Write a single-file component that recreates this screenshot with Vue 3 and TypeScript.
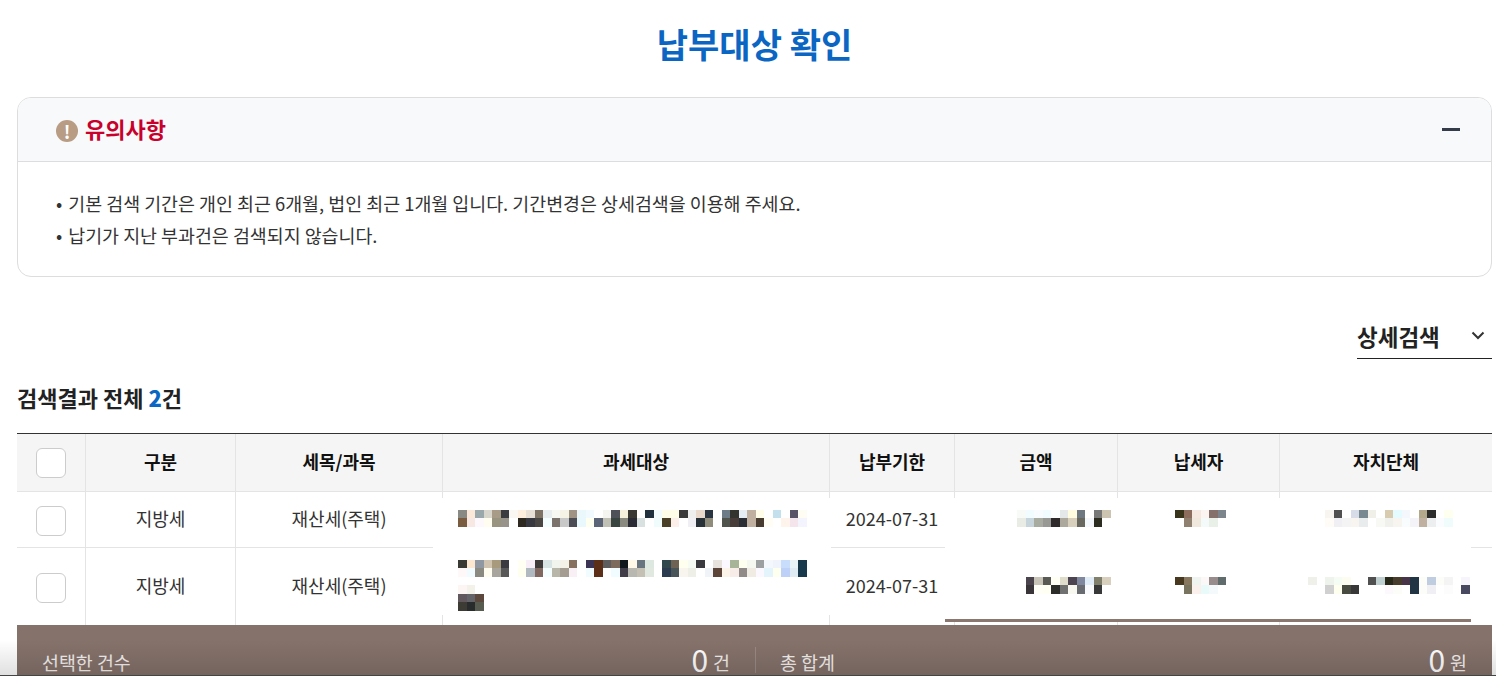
<script setup lang="ts">
interface Mosaic {
  left: number;
  lines: string[];
}

interface Row {
  kind: string;
  tax: string;
  subject: Mosaic;
  due: string;
  amount: Mosaic;
  payer: Mosaic;
  gov: Mosaic;
}

const notes = [
  "기본 검색 기간은 개인 최근 6개월, 법인 최근 1개월 입니다. 기간변경은 상세검색을 이용해 주세요.",
  "납기가 지난 부과건은 검색되지 않습니다.",
];

const heads = ["구분", "세목/과목", "과세대상", "납부기한", "금액", "납세자", "자치단체"];

// redacted values in the source picture, one hex colour per block ("-" = blank)
const rows: Row[] = [
  {
    kind: "지방세",
    tax: "재산세(주택)",
    due: "2024-07-31",
    subject: {
      left: 15,
      lines: [
        "8a8a85 fce8d8 9aa8ac d8d6cc a89c88 3a3c42 faf6f2 fdeedd e8e0d6 7e7264 e8eef0 f8f8f2 f5f2e6 a09484 eaf8fc f0faff - f4f4f0 4e5258 f5f0dc 3a3832 - 20303c f2fcfc fffce8 fffce8 3a3a3a eeeeee e8d8cc 2a3440 - 6e7c88 34342f e4ecf4 c0b0a0 fffce8 - c4e0ec - 5a5468 fffcf4",
        "7a5c40 f8e8e4 fdf8fc fffdf0 989480 98948c - 2e2a22 383840 4a4644 f4feff 7c746c c8c8c8 4c4c54 e8f8fc fffff0 5c6478 c0c0b4 384440 8a8a80 2a2a34 d8e0e0 - f0fcfc 4a4028 fceee8 - f0f0f4 283038 908c7c - 50544c 483c38 282e34 c0b0a0 483c30 fffdf4 - fff4ec f4e4ec f4f4ff",
      ],
    },
    amount: {
      left: 62,
      lines: [
        "f8faf8 f0fcff f8fcff f0fcff fcffff e4e8e8 fffce0 6e7880 - 787878 ccc4b0",
        "e8ece4 c8d4dc a8aca0 989894 2e2a2c aca89c d8d0bc 686860 f4f8fc 2c2c20 -",
      ],
    },
    payer: {
      left: 57,
      lines: [
        "38341c 8c6c5c f4e8e0 fcf4f0 86706c 7c848c",
        "- 908070 f0e8dc f4fafa e8f0e8 -",
      ],
    },
    gov: {
      left: 45,
      lines: [
        "f8f4f0 505050 - d8dce8 788890 f0f0e8 - d8ccb0 e4fcff f4f8fc - b4a88c 2c2c2c - fffff0",
        "fffcf8 f0f0f4 f4f4f4 f8f4f0 e8ecec - f8f8f4 f0f0ec f8f4f0 f8fcfc f4f4f8 c0b0a0 eceef0 fafcff f0fcfc",
      ],
    },
  },
  {
    kind: "지방세",
    tax: "재산세(주택)",
    due: "2024-07-31",
    subject: {
      left: 15,
      lines: [
        "3a3a34 fce8d0 9098a4 d0c4b0 a89a7c 3a3a40 - fffff4 f8eef8 3e3a3a d8e4e4 f0f4ec f4f2e8 887060 - 3c3454 5c3018 5e5e5e 7e6a5c 10181c fff8e8 687480 dce8e0 - 30484c 6e6254 fffff0 f6fcf4 3a3a3e - e8e2dc fcf8ff a8b498 fffff0 f4f8f0 9ca0a0 f4f8fc f0f2fc c8dcfc e8f4f8 18384c",
        "fff8f8 f0fcff 8a8a80 fffdf0 a8a69c 585858 - fffff0 b0b8c0 806860 f4feff b8b6a8 a49c90 f8f0f4 - f0fcff 5c3018 - f0fcff 403c48 b8b8b0 c4c0b4 e0e8e0 - 2c3c50 485458 f8f4ee eef0e8 - f0f4f8 5c4438 fcf4e8 f8ece8 908a88 f0ece4 fcf8ff e4f4fc fffff0 bcd0f8 e0ecf4 18384c",
        "-",
        "fdf4f4 f4f2e8 -",
        "60585c 646468 5c483c",
        "3c3c34 282c2c 585c50",
      ],
    },
    amount: {
      left: 62,
      lines: [
        "- 4c444c c8c4b8 5a5a54 fffff4 e0dccc 4c4450 8088a0 e0ecf8 80806c d8d0bc",
        "- 383438 fffff8 fffff4 2c2c28 707070 f8f8f0 686c70 f8fafc 383838 -",
      ],
    },
    payer: {
      left: 57,
      lines: [
        "483820 887860 f0f4f0 fcf8f8 988c8c 606c6c",
        "- 787460 fcf0ec e8fafa f4fafc -",
      ],
    },
    gov: {
      left: 28,
      lines: [
        "f0f0ea - eef4ec f4fcf4 fcfcf0 - - 505050 c0d0d0 282818 483c2c 483448 203444 fcfcf8 c0cce0 fcfcf8 f4f4f4 - f8f4fc",
        "- - d0d0d0 fffff0 484c40 383838 - - - fcf8fc fcfcf8 - 203444 fcfcf8 f0f0f4 - fcfcfc - 484860",
      ],
    },
  },
];

const blocks = (line: string) =>
  line.split(" ").map((c) => (c === "-" ? "transparent" : `#${c}`));
</script>

<template>
  <div class="page">
    <h1 class="title">납부대상 확인</h1>

    <section class="notice">
      <header class="notice-head">
        <div class="notice-title">
          <span class="warn">!</span>
          <h2>유의사항</h2>
        </div>
        <span class="minus"></span>
      </header>
      <ul class="notice-body">
        <li v-for="note in notes" :key="note">{{ note }}</li>
      </ul>
    </section>

    <div class="search-row">
      <div class="search-toggle">
        <span>상세검색</span>
        <svg width="14" height="9" viewBox="0 0 14 9" fill="none">
          <path d="M1.5 1.5 7 7l5.5-5.5" stroke="#333" stroke-width="2" />
        </svg>
      </div>
    </div>

    <p class="result">검색결과 전체 <b>2</b>건</p>

    <div class="table">
      <div class="cell head"><span class="check"></span></div>
      <div v-for="h in heads" :key="h" class="cell head label">{{ h }}</div>

      <template v-for="(row, i) in rows" :key="i">
        <div class="cell" :class="`row${i}`"><span class="check row-check"></span></div>
        <div class="cell" :class="`row${i}`">{{ row.kind }}</div>
        <div class="cell" :class="`row${i}`">{{ row.tax }}</div>
        <div
          v-for="m in [row.subject]"
          :key="m.left"
          class="cell start"
          :class="`row${i}`"
          :style="{ paddingLeft: m.left + 'px' }"
        >
          <div class="mosaic">
            <div v-for="(line, l) in m.lines" :key="l" class="mosaic-line">
              <i v-for="(c, b) in blocks(line)" :key="b" :style="{ background: c }"></i>
            </div>
          </div>
        </div>
        <div class="cell" :class="`row${i}`">{{ row.due }}</div>
        <div
          v-for="(m, k) in [row.amount, row.payer, row.gov]"
          :key="k"
          class="cell start"
          :class="`row${i}`"
          :style="{ paddingLeft: m.left + 'px' }"
        >
          <div class="mosaic">
            <div v-for="(line, l) in m.lines" :key="l" class="mosaic-line">
              <i v-for="(c, b) in blocks(line)" :key="b" :style="{ background: c }"></i>
            </div>
          </div>
        </div>
      </template>

      <div class="mask mask-subject"></div>
      <div class="mask mask-values"></div>
    </div>

    <div class="sum-bar">
      <div class="sum">
        <span>선택한 건수</span>
        <span class="sum-value"><strong>0</strong>건</span>
      </div>
      <div class="sum">
        <span>총 합계</span>
        <span class="sum-value"><strong>0</strong>원</span>
      </div>
    </div>

    <div class="fade"></div>
  </div>
</template>

<style>
html,
body {
  margin: 0;
  background: #fff;
  overflow: hidden;
}
</style>

<style scoped>
.page {
  position: relative;
  height: 676px;
  overflow: hidden;
  box-sizing: border-box;
  padding: 0 4px 0 17px;
  font-family: "Noto Sans CJK KR", "Noto Sans", sans-serif;
  color: #222;
}

.title {
  margin: 0;
  padding-top: 18px;
  height: 97px;
  box-sizing: border-box;
  text-align: center;
  font-size: 34px;
  line-height: 52px;
  font-weight: 700;
  color: #0b66c3;
}

.notice {
  border: 1px solid #ddd;
  border-radius: 14px;
  overflow: hidden;
}

.notice-head {
  height: 63px;
  display: flex;
  align-items: center;
  justify-content: space-between;
  padding: 0 31px 0 38px;
  background: #f8f9fa;
  border-bottom: 1px solid #ddd;
}

.notice-title {
  display: flex;
  align-items: center;
  gap: 7px;
}

.notice-title h2 {
  margin: 0 0 4px;
  font-size: 22px;
  line-height: 32px;
  font-weight: 700;
  color: #c8002c;
}

.warn {
  width: 22px;
  height: 22px;
  margin-top: 3px;
  border-radius: 50%;
  background: #b89c84;
  color: #fff;
  font-size: 18px;
  line-height: 22px;
  font-weight: 700;
  text-align: center;
}

.minus {
  width: 18px;
  height: 2.5px;
  background: #333c48;
}

.notice-body {
  margin: 0;
  padding: 25px 38px 25px;
  list-style: none;
  font-size: 18.4px;
  line-height: 32px;
  color: #333;
}

.notice-body li::before {
  content: "•";
  margin-right: 6px;
}

.search-row {
  display: flex;
  justify-content: flex-end;
  padding-top: 42px;
}

.search-toggle {
  width: 135px;
  height: 40px;
  box-sizing: border-box;
  display: flex;
  align-items: center;
  justify-content: space-between;
  padding: 0 7px 6px 0;
  border-bottom: 1px solid #222;
  font-size: 22.5px;
  font-weight: 700;
  color: #222;
}

.result {
  margin: 0;
  padding-top: 22px;
  height: 74px;
  box-sizing: border-box;
  font-size: 22px;
  line-height: 32px;
  font-weight: 700;
  color: #222;
}

.result b {
  color: #0b66c3;
}

.table {
  position: relative;
  display: grid;
  grid-template-columns: 69px 150px 207px 387px 125px 163px 162px 1fr;
  grid-template-rows: 58px 56px 77px;
  border-top: 1px solid #333;
}

.cell {
  display: flex;
  align-items: center;
  justify-content: center;
  box-sizing: border-box;
  font-size: 18px;
  color: #333;
  border-right: 1px solid #e4e4e4;
  border-bottom: 1px solid #e4e4e4;
}

.cell:nth-child(8n) {
  border-right: 0;
}

.head {
  background: #f5f5f5;
  font-weight: 700;
  color: #111;
}

.label {
  padding-bottom: 3px;
}

.row0,
.row1 {
  padding-bottom: 3px;
}

.row1 {
  border-bottom: 0;
}

.start {
  justify-content: flex-start;
  padding-bottom: 0;
}

.check {
  width: 30px;
  height: 30px;
  box-sizing: border-box;
  background: #fff;
  border: 1px solid #ccc;
  border-radius: 6px;
}

.row-check {
  margin-top: 5px;
}

.mosaic {
  position: relative;
  z-index: 2;
  margin-bottom: 3px;
}

.mosaic-line {
  display: flex;
  height: 8.5px;
}

.mosaic-line i {
  display: block;
  width: 8.5px;
  flex: none;
}

.mask {
  position: absolute;
  z-index: 1;
  background: #fff;
}

.mask-subject {
  left: 416px;
  top: 64px;
  width: 398px;
  height: 117px;
}

.mask-values {
  left: 928px;
  top: 64px;
  width: 526px;
  height: 121px;
  box-sizing: content-box;
  border-bottom: 3px solid #8a7870;
}

.sum-bar {
  display: flex;
  height: 70px;
  background: #85726b;
  color: #f4f0ee;
  font-size: 18.4px;
}

.sum {
  flex: 1;
  display: flex;
  justify-content: space-between;
  align-items: flex-start;
  padding: 19px 25px 0;
  line-height: 36px;
  position: relative;
}

.sum:first-child {
  flex: none;
  width: 738px;
  box-sizing: border-box;
}

.sum:last-child::before {
  content: "";
  position: absolute;
  left: 0;
  top: 22px;
  height: 26px;
  width: 1px;
  background: #9a8a84;
}

.sum-value {
  display: flex;
  align-items: flex-start;
  gap: 5px;
}

.sum-value strong {
  font-size: 30px;
  line-height: 36px;
  margin-top: -3px;
  font-weight: 400;
  color: #fff;
}

.fade {
  position: absolute;
  left: 0;
  right: 0;
  bottom: 0;
  height: 36px;
  box-sizing: border-box;
  background: linear-gradient(rgba(0, 0, 0, 0), rgba(0, 0, 0, 0.12));
  border-bottom: 1px solid #444;
  pointer-events: none;
}
</style>
